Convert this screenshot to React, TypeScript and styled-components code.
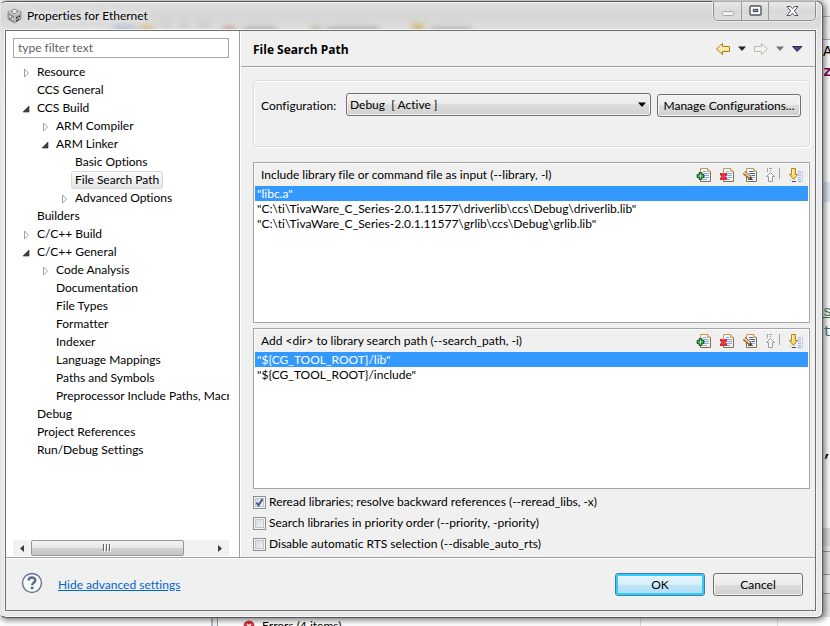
import React from "react";
import styled, { createGlobalStyle, css } from "styled-components";

const GlobalStyle = createGlobalStyle`
  * { box-sizing: border-box; }
  body {
    margin: 0;
    background: #fff;
    color: #000;
    font-family: Lato, "Noto Sans", sans-serif;
    font-size: 12px;
    line-height: 18px;
    font-variant-ligatures: none;
  }
  button, input, select { font: inherit; color: inherit; }
`;

/* ---------- desktop and the editor behind the dialog ---------- */

const Desktop = styled.div`
  position: relative;
  display: flex;
  min-height: 100vh;
  padding: 1px 7px 8px 0;
  overflow: hidden;
`;

const Backdrop = styled.div`
  position: absolute;
  inset: 0;
  background: #fff;
`;

const Band = styled.div<{ $top: number; $height: number; $color: string; $line?: string }>`
  position: absolute;
  right: 0;
  width: 12px;
  top: ${(p) => p.$top}px;
  height: ${(p) => p.$height}px;
  background: ${(p) => p.$color};
  border-bottom: 1px solid ${(p) => p.$line ?? p.$color};
`;

const CodeGlyph = styled.span<{ $top: number; $color: string; $bold?: boolean; $underline?: boolean }>`
  position: absolute;
  right: 0;
  width: 7px;
  overflow: hidden;
  top: ${(p) => p.$top}px;
  color: ${(p) => p.$color};
  font: ${(p) => (p.$bold ? 700 : 400)} 15px/20px "Liberation Mono", monospace;
  text-decoration: ${(p) => (p.$underline ? "underline" : "none")};
`;

const Problems = styled.div`
  position: absolute;
  left: 211px;
  right: 0;
  bottom: -8px;
  height: 16px;
  display: flex;
  align-items: center;
  gap: 7px;
  padding-left: 30px;
  border-left: 2px solid #a9bccb;
  box-shadow: inset 4px 0 0 #f4f4f4, inset 5px 0 0 #9a9a9a;
  white-space: nowrap;
`;

const ProblemsColumn = styled.span<{ $left: number }>`
  position: absolute;
  left: ${(p) => p.$left}px;
  top: 0;
  bottom: 0;
  border-left: 1px solid #dcdcdc;
`;

/* ---------- window frame ---------- */

const Window = styled.section`
  position: relative;
  flex: 1;
  min-width: 0;
  display: flex;
  flex-direction: column;
  padding: 0 6px 6px 4px;
  border: 1px solid #55585a;
  border-left-color: #e4e4e4;
  border-radius: 6px;
  background: linear-gradient(180deg, #dedede 0, #d6d6d6 16px, #e2e2e2 30px, #ebebeb 120px, #e8e8e8 100%);
  box-shadow: inset -1px -1px 0 #f8f8f8, inset 0 1px 0 #f4f4f4, 1px 1px 6px 1px rgba(0, 0, 0, 0.55);
`;

const GlassBlur = styled.svg`
  position: absolute;
  left: 0;
  top: 13px;
`;

const TitleBar = styled.header`
  position: relative;
  display: flex;
  align-items: flex-start;
  gap: 5px;
  height: 28px;
  padding-left: 2px;
  white-space: nowrap;
  svg { flex: none; }
`;

const TitleIcon = styled.span`
  display: flex;
  padding-top: 6px;
`;

const Title = styled.h1`
  flex: 1;
  margin: 0;
  padding-top: 5px;
  font-size: 12px;
  line-height: 18px;
  font-weight: 400;
  text-shadow: 0 0 6px #fff, 0 0 8px #fff;
`;

const Caption = styled.div`
  display: flex;
  height: 19px;
  border: 1px solid #8b8e90;
  border-top: 0;
  border-radius: 0 0 5px 5px;
  overflow: hidden;
  box-shadow: 0 0 0 1px rgba(255, 255, 255, 0.5);
`;

const CaptionButton = styled.button<{ $wide?: boolean }>`
  display: flex;
  align-items: center;
  justify-content: center;
  width: ${(p) => (p.$wide ? 47 : 27)}px;
  padding: 0;
  border: 0;
  background: linear-gradient(180deg, #e9e9e9, #d9d9d9 50%, #dedede);
  & + & { border-left: 1px solid #9a9d9f; }
`;

const Client = styled.div`
  position: relative;
  flex: 1;
  display: flex;
  flex-direction: column;
  border: 1px solid #6d6f71;
  background: #f0f0f0;
  box-shadow: 0 0 0 1px #f4f4f4;
`;

const Body = styled.div`
  flex: 1;
  display: flex;
  min-height: 0;
`;

/* ---------- navigation tree ---------- */

const Sidebar = styled.nav`
  flex: none;
  width: 234px;
  display: flex;
  flex-direction: column;
  padding: 7px 10px 1px 7px;
  background: #fff;
  border-right: 1px solid #a0a0a0;
`;

const Filter = styled.input`
  width: 100%;
  height: 20px;
  padding: 0 4px 2px;
  border: 1px solid #a3a5ab;
  background: #fff;
  outline: none;
  &::placeholder { color: #5f5f5f; opacity: 1; }
`;

const Tree = styled.ul`
  flex: 1;
  margin: 5px 0 0;
  padding: 0;
  list-style: none;
  overflow: hidden;
`;

const TreeRow = styled.li<{ $level: number }>`
  display: flex;
  align-items: center;
  height: 18px;
  padding-left: ${(p) => 8 + p.$level * 19}px;
  white-space: nowrap;
`;

const Twisty = styled.span`
  flex: none;
  display: flex;
  width: 12px;
  padding: 2px 0 0 2px;
`;

const TreeLabel = styled.span<{ $selected?: boolean }>`
  padding: 0 3px;
  line-height: 16px;
  border: 1px solid transparent;
  border-radius: 3px;
  ${(p) =>
    p.$selected &&
    css`
      border-color: #d9d9d9;
      background: linear-gradient(#fafafa, #e6e6e6);
    `}
`;

const ScrollBar = styled.div`
  display: grid;
  grid-template-columns: 18px 153px 1fr 18px;
  align-items: stretch;
  height: 16px;
  background: #f1f1f1;
`;

const ScrollButton = styled.button`
  display: flex;
  align-items: center;
  justify-content: center;
  padding: 0;
  border: 0;
  background: none;
`;

const ScrollThumb = styled.div`
  display: flex;
  align-items: center;
  justify-content: center;
  border: 1px solid #979797;
  border-radius: 2px;
  background: linear-gradient(#f3f3f3, #e6e6e7 50%, #d1d2d4 50%, #c3c4c6);
`;

/* ---------- settings page ---------- */

const Page = styled.main`
  flex: 1;
  min-width: 0;
  display: flex;
  flex-direction: column;
  border-left: 1px solid #fff;
`;

const PageHeader = styled.div`
  display: flex;
  align-items: center;
  justify-content: space-between;
  height: 36px;
  padding: 0 12px;
  border-bottom: 1px solid #a0a0a0;
  box-shadow: 0 1px 0 #fff;
`;

const PageTitle = styled.h2`
  margin: 0;
  padding-top: 3px;
  font-family: "Open Sans", "Noto Sans", sans-serif;
  font-size: 12px;
  font-weight: 700;
`;

const History = styled.div`
  display: flex;
  align-items: center;
  gap: 7px;
`;

const IconButton = styled.button`
  display: flex;
  padding: 0;
  border: 0;
  background: none;
`;

const Content = styled.div`
  flex: 1;
  display: flex;
  flex-direction: column;
  padding: 13px 5px 4px 12px;
`;

const ConfigGroup = styled.div`
  display: flex;
  align-items: flex-start;
  gap: 6px;
  height: 67px;
  margin-bottom: 15px;
  padding: 12px 8px 0 7px;
  border: 1px solid #d5dfe5;
  border-radius: 4px;
  box-shadow: inset 1px 1px 0 #fff, 1px 1px 0 #fff;
`;

const ConfigLabel = styled.label`
  width: 79px;
  padding-top: 4px;
  white-space: nowrap;
`;

const SelectBox = styled.div`
  flex: 1;
  min-width: 0;
  display: grid;
  align-items: center;
  & > * { grid-area: 1 / 1; }
  svg { justify-self: end; margin-right: 5px; pointer-events: none; }
`;

const face = css`
  border: 1px solid #707070;
  border-radius: 3px;
  background: linear-gradient(#f2f2f2, #ebebeb 50%, #dddddd 50%, #cfcfcf);
  box-shadow: inset 0 0 0 1px #f7f7f7;
`;

const Select = styled.select`
  appearance: none;
  width: 100%;
  height: 23px;
  padding: 0 3px;
  ${face}
`;

const PushButton = styled.button<{ $width: number; $primary?: boolean }>`
  width: ${(p) => p.$width}px;
  height: 23px;
  padding: 0;
  white-space: nowrap;
  ${face}
  ${(p) =>
    p.$primary &&
    css`
      border-color: #3c7fb1;
      background: linear-gradient(#e6f5fc, #d9f0fb 50%, #bee6fa 50%, #b0dcf3);
      box-shadow: inset 0 0 0 2px #35cdf6;
    `}
`;

const ManageSlot = styled.div`
  padding-top: 1px;
`;

const ListPanel = styled.section`
  flex: 1;
  min-height: 100px;
  padding: 1px;
  border: 1px solid #a3a5ab;
  background: #fff;
  & + & { margin-top: 5px; }
`;

const ListHeader = styled.div`
  display: flex;
  align-items: center;
  justify-content: space-between;
  height: 22px;
  padding: 0 4px 0 6px;
  background: #f0f0f0;
`;

const ListTitle = styled.h3`
  margin: 0;
  font-size: 12px;
  font-weight: 400;
`;

const ListTools = styled.div`
  display: flex;
  gap: 7px;
`;

const List = styled.ul`
  margin: 0;
  padding: 0;
  list-style: none;
`;

const ListItem = styled.li<{ $selected?: boolean }>`
  height: 15px;
  padding-left: 2px;
  line-height: 15px;
  white-space: nowrap;
  background: ${(p) => (p.$selected ? "#3399ff" : "transparent")};
  color: ${(p) => (p.$selected ? "#fff" : "#000")};
`;

const Options = styled.div`
  display: flex;
  flex-direction: column;
  gap: 3px;
  padding-top: 4px;
`;

const Option = styled.label`
  display: flex;
  align-items: center;
  gap: 3px;
  height: 18px;
`;

const Check = styled.input`
  appearance: none;
  width: 13px;
  height: 13px;
  margin: 0;
  border: 1px solid #8e8f8f;
  background: linear-gradient(135deg, #cfd3da, #f6f6f6);
  box-shadow: inset 0 0 0 1px #f4f4f4, inset 0 0 0 2px #c2c6cc;
`;

const CheckBox = styled.span`
  display: grid;
  & > * { grid-area: 1 / 1; }
  svg { pointer-events: none; }
`;

/* ---------- footer ---------- */

const Footer = styled.footer`
  display: flex;
  align-items: center;
  gap: 8px;
  height: 53px;
  padding: 1px 12px 0 15px;
  border-top: 1px solid #a0a0a0;
  box-shadow: inset 0 1px 0 #fff;
`;

const HelpButton = styled(IconButton)`
  padding-bottom: 3px;
`;

const AdvancedLink = styled.a`
  flex: 1;
  padding-left: 7px;
  color: #0066cc;
  text-decoration: underline;
`;

/* ---------- icons ---------- */

const CubeIcon = () => (
  <svg width="15" height="16" viewBox="0 0 15 16">
    <path d="M7.5 1 14 4v7l-6.500 4L1 11V4z" fill="#b9b9b9" stroke="#8a8a8a" />
    <path d="M7.500 1.500 13 4 7.500 7 2 4z" fill="#e6e6e6" />
    <path d="M1.500 5 7 8v6.500L1.500 11z" fill="#8f8f8f" />
    <path d="M4 3.500h2v1H4zM9 3.500h2v1H9zM6.500 5h2v1h-2z" fill="#555" />
    <path d="M2.500 7l1.500 1v2l-1.500-1zM5 9.500l1.500 1v2L5 11.500z" fill="#f4f4f4" />
    <path d="M9 9l1.500-1v2L9 11zM11.500 8l1.500-1v2l-1.500 1zM9 12.500l3-2v1.200l-3 2z" fill="#2e2e2e" />
  </svg>
);

const TriangleDown = ({ color, size = 8 }: { color: string; size?: number }) => (
  <svg width={size} height="6" viewBox={`0 0 ${size} 6`}>
    <path d={`M0 0.500H${size}L${size / 2} 5z`} fill={color} />
  </svg>
);

const MenuTriangle = () => (
  <svg width="12" height="6" viewBox="0 0 12 6">
    <path d="M1.500 .5H11L6.200 5.500z" fill="#4b4690" stroke="#16122e" strokeWidth=".8" />
  </svg>
);

const BackArrow = () => (
  <svg width="16" height="14" viewBox="0 0 16 14">
    <defs>
      <linearGradient id="gold" x1="0" y1="0" x2="0" y2="1">
        <stop offset="0" stopColor="#fffbe6" />
        <stop offset="1" stopColor="#fbd873" />
      </linearGradient>
    </defs>
    <path d="M1.500 7 7.500 1.500V4.500h7v5h-7v3z" fill="url(#gold)" stroke="#b07a10" strokeLinejoin="round" />
  </svg>
);

const ForwardArrow = () => (
  <svg width="16" height="14" viewBox="0 0 16 14">
    <path d="M14.500 7 8.500 1.500V4.500h-7v5h7v3z" fill="#f3f3f1" stroke="#b9b9b3" strokeLinejoin="round" />
  </svg>
);

const Sheet = ({ x }: { x: number }) => (
  <g transform={`translate(${x} 0)`}>
    <path d="M.5 1.500H8L10.500 4.500V14.500H.5z" fill="#f1f5fc" />
    <path d="M.5 9V1.500H8" fill="none" stroke="#c29a4c" />
    <path d="M10.500 4.500H7.500V1.500z" fill="#e2b75a" stroke="#c29a4c" strokeWidth=".6" />
    <path d="M.5 9V14.500H10.500V4.500" fill="none" stroke="#85713f" />
    <path d="M3 4.500H6M3 6.500H9M3 8.500H9M3 10.500H9M3 12.500H7" stroke="#8fa6d4" />
  </g>
);

const AddIcon = () => (
  <svg width="16" height="16" viewBox="0 0 16 16">
    <Sheet x={4} />
    <path d="M3 5.500H6V7.500H8V10.500H6V12.500H3V10.500H1V7.500H3z" fill="#1f7a35" stroke="#0f5a26" strokeWidth=".8" />
    <path d="M4.500 6.500V11.500M2 9H7" stroke="#a6e08a" />
  </svg>
);

const DeleteIcon = () => (
  <svg width="16" height="16" viewBox="0 0 16 16">
    <Sheet x={4} />
    <path d="M1 6H3.500L4.500 7.500 5.500 6H8V8L6.500 9.500 8 11V13H5.500L4.500 11.500 3.500 13H1V11L2.500 9.500 1 8z" fill="#dd2234" />
    <path d="M3 8l3 3M6 8l-3 3" stroke="#f0606c" strokeWidth=".8" />
  </svg>
);

const EditIcon = () => (
  <svg width="16" height="16" viewBox="0 0 16 16">
    <Sheet x={4} />
    <path d="M7 4.500H11M8 6.500H13M10 8.500H13M6 12.500H11" stroke="#4d628f" />
    <path d="M2 5.500 8 10.500" stroke="#80592a" strokeWidth="3.600" />
    <path d="M2 5.200 7.800 10" stroke="#f3cb8b" strokeWidth="2" />
    <path d="M7 12 9.800 12.500 9.200 9.500z" fill="#222" />
  </svg>
);

const UpIcon = () => (
  <svg width="16" height="16" viewBox="0 0 16 16">
    <path d="M5.500 5.500 9.500 9.500H7.500V14.500H3.500V9.500H1.500z" fill="#f6f6f6" stroke="#9c9c9c" />
    <path d="M2.500 1V5M4 1.500H7M5 3.500H6M14.500 1V12" stroke="#a2a2a2" />
  </svg>
);

const DownIcon = () => (
  <svg width="16" height="16" viewBox="0 0 16 16">
    <path d="M9 4H15V15H9z" fill="#e6edf7" />
    <path d="M10 4.500H13M10 6.500H13M10 8.500H13M10 10.500H13M10 12.500H13" stroke="#a9bddf" />
    <path d="M14.500 4V15M2.500 12V15" stroke="#c8cfdb" />
    <path d="M4 14.500H8" stroke="#27508c" />
    <path d="M10 14.500H13" stroke="#8ca9d2" />
    <path d="M3.500 1.500H7.500V7.500H9.500L5.500 12.500 1.500 7.500H3.500z" fill="#fbd96d" stroke="#b8831a" />
    <path d="M4.500 2.500V8" stroke="#fff5c8" />
  </svg>
);

const CollapsedIcon = () => (
  <svg width="8" height="10" viewBox="0 0 8 10">
    <path d="M1.500 1 5.500 5 1.500 9z" fill="#fff" stroke="#a0a0a0" />
  </svg>
);

const ExpandedIcon = () => (
  <svg width="8" height="10" viewBox="0 0 8 10">
    <path d="M6 2V8H0z" fill="#404040" stroke="#262626" strokeWidth=".6" />
  </svg>
);

const HelpIcon = () => (
  <svg width="22" height="22" viewBox="0 0 22 22">
    <circle cx="11" cy="11" r="9.500" fill="#f8f9fb" stroke="#66748c" strokeWidth="1.400" />
    <path d="M7.600 8.600C7.600 4.500 14.300 4.600 14.300 8.300 14.300 10.600 11.200 10.800 11.200 13.200" fill="none" stroke="#5d6c88" strokeWidth="2.500" />
    <rect x="9.800" y="14.700" width="2.700" height="2.500" fill="#5d6c88" />
  </svg>
);

/* ---------- data ---------- */

type Node = { label: string; level: number; open?: boolean; selected?: boolean };

const nodes: Node[] = [
  { label: "Resource", level: 0, open: false },
  { label: "CCS General", level: 0 },
  { label: "CCS Build", level: 0, open: true },
  { label: "ARM Compiler", level: 1, open: false },
  { label: "ARM Linker", level: 1, open: true },
  { label: "Basic Options", level: 2 },
  { label: "File Search Path", level: 2, selected: true },
  { label: "Advanced Options", level: 2, open: false },
  { label: "Builders", level: 0 },
  { label: "C/C++ Build", level: 0, open: false },
  { label: "C/C++ General", level: 0, open: true },
  { label: "Code Analysis", level: 1, open: false },
  { label: "Documentation", level: 1 },
  { label: "File Types", level: 1 },
  { label: "Formatter", level: 1 },
  { label: "Indexer", level: 1 },
  { label: "Language Mappings", level: 1 },
  { label: "Paths and Symbols", level: 1 },
  { label: "Preprocessor Include Paths, Macros etc.", level: 1 },
  { label: "Debug", level: 0 },
  { label: "Project References", level: 0 },
  { label: "Run/Debug Settings", level: 0 },
];

const lists = [
  {
    title: "Include library file or command file as input (--library, -l)",
    items: [
      '"libc.a"',
      '"C:\\ti\\TivaWare_C_Series-2.0.1.11577\\driverlib\\ccs\\Debug\\driverlib.lib"',
      '"C:\\ti\\TivaWare_C_Series-2.0.1.11577\\grlib\\ccs\\Debug\\grlib.lib"',
    ],
  },
  {
    title: "Add <dir> to library search path (--search_path, -i)",
    items: ['"${CG_TOOL_ROOT}/lib"', '"${CG_TOOL_ROOT}/include"'],
  },
];

const tools = [
  { name: "Add", Icon: AddIcon },
  { name: "Delete", Icon: DeleteIcon },
  { name: "Edit", Icon: EditIcon },
  { name: "Move up", Icon: UpIcon },
  { name: "Move down", Icon: DownIcon },
];

const options = [
  { label: "Reread libraries; resolve backward references (--reread_libs, -x)", on: true },
  { label: "Search libraries in priority order (--priority, -priority)", on: false },
  { label: "Disable automatic RTS selection (--disable_auto_rts)", on: false },
];

const CheckOption = ({ label, on }: { label: string; on: boolean }) => {
  const [checked, setChecked] = React.useState(on);
  return (
    <Option>
      <CheckBox>
        <Check type="checkbox" checked={checked} onChange={(e) => setChecked(e.target.checked)} />
        {checked && (
          <svg width="13" height="13" viewBox="0 0 13 13">
            <path d="M3.500 6.500 5.500 9.500 9.500 3" fill="none" stroke="#3f5896" strokeWidth="2" />
          </svg>
        )}
      </CheckBox>
      {label}
    </Option>
  );
};

export default function App() {
  return (
    <Desktop>
      <GlobalStyle />
      <Backdrop aria-hidden="true">
        <Band $top={0} $height={17} $color="#f4f4f4" $line="#b5b5b5" />
        <Band $top={17} $height={23} $color="#f4f4f4" $line="#a9a9a9" />
        <Band $top={182} $height={20} $color="#dfeaf7" />
        <Band $top={528} $height={18} $color="#dedede" />
        <Band $top={546} $height={6} $color="#f0f0f0" $line="#9a9a9a" />
        <Band $top={552} $height={23} $color="#e8e8e8" $line="#9a9a9a" />
        <Band $top={575} $height={19} $color="#f4f4f4" $line="#9a9a9a" />
        <Band $top={594} $height={23} $color="#e6e6e6" />
        <CodeGlyph $top={43} $color="#000">A</CodeGlyph>
        <CodeGlyph $top={63} $color="#7f0055" $bold>z</CodeGlyph>
        <CodeGlyph $top={303} $color="#3f7f5f" $underline>s</CodeGlyph>
        <CodeGlyph $top={323} $color="#3f7f7f">t</CodeGlyph>
        <CodeGlyph $top={443} $color="#000" $bold>,</CodeGlyph>
        <Problems>
          <svg width="12" height="12" viewBox="0 0 12 12">
            <circle cx="6" cy="6" r="5.500" fill="#d2333c" />
            <path d="M4 4l4 4M8 4l-4 4" stroke="#fff" strokeWidth="1.500" />
          </svg>
          Errors (4 items)
          <ProblemsColumn $left={427} />
          <ProblemsColumn $left={564} />
        </Problems>
      </Backdrop>

      <Window>
        <GlassBlur width="520" height="16" aria-hidden="true">
          <defs>
            <filter id="glass" x="-5%" y="-100%" width="110%" height="300%">
              <feGaussianBlur stdDeviation="3" />
            </filter>
          </defs>
          <g filter="url(#glass)" opacity=".8">
            <rect x="112" y="11" width="22" height="7" fill="#9fb8d4" />
            <rect x="138" y="11" width="14" height="7" fill="#d9b25c" />
            <rect x="160" y="8" width="10" height="4" fill="#bcbcbc" />
            <rect x="178" y="8" width="10" height="4" fill="#bcbcbc" />
            <rect x="196" y="8" width="14" height="4" fill="#bcbcbc" />
            <rect x="222" y="12" width="12" height="6" fill="#c8777a" />
            <rect x="242" y="13" width="34" height="5" fill="#8c8c8c" />
            <rect x="310" y="11" width="10" height="7" fill="#b3ab8c" />
            <rect x="326" y="13" width="52" height="5" fill="#8c8c8c" />
            <rect x="411" y="9" width="12" height="8" fill="#c9ab4e" />
            <rect x="430" y="13" width="40" height="5" fill="#949494" />
          </g>
        </GlassBlur>
        <TitleBar>
          <TitleIcon><CubeIcon /></TitleIcon>
          <Title>Properties for Ethernet</Title>
          <Caption>
            <CaptionButton aria-label="Minimize" disabled>
              <svg width="14" height="18" viewBox="0 0 14 18">
                <rect x="1.500" y="9.500" width="11" height="4" rx="1" fill="#f2f2f2" stroke="#a9a9a9" />
              </svg>
            </CaptionButton>
            <CaptionButton aria-label="Maximize">
              <svg width="13" height="12" viewBox="0 0 13 12">
                <rect x="1" y="1" width="11" height="9" rx="1" fill="#fff" stroke="#4e5563" strokeWidth="1.400" />
                <rect x="4.500" y="4.500" width="4" height="2" fill="#e2e2e2" stroke="#4e5563" strokeWidth="1.400" />
              </svg>
            </CaptionButton>
            <CaptionButton aria-label="Close" $wide>
              <svg width="13" height="12" viewBox="0 0 13 12">
                <path d="M1 1.500H4.500L6.500 3.800 8.500 1.500H12L8.400 6 12 10.500H8.500L6.500 8.200 4.500 10.500H1L4.600 6z" fill="#fff" stroke="#4e5563" />
              </svg>
            </CaptionButton>
          </Caption>
        </TitleBar>

        <Client>
          <Body>
            <Sidebar aria-label="Property pages">
              <Filter type="text" placeholder="type filter text" aria-label="Filter" />
              <Tree>
                {nodes.map((n) => (
                  <TreeRow key={n.label} $level={n.level}>
                    <Twisty>
                      {n.open === true && <ExpandedIcon />}
                      {n.open === false && <CollapsedIcon />}
                    </Twisty>
                    <TreeLabel $selected={n.selected}>{n.label}</TreeLabel>
                  </TreeRow>
                ))}
              </Tree>
              <ScrollBar>
                <ScrollButton aria-label="Scroll left">
                  <svg width="4" height="7" viewBox="0 0 4 7"><path d="M4 0V7L0 3.500z" fill="#3c3c3c" /></svg>
                </ScrollButton>
                <ScrollThumb>
                  <svg width="9" height="8" viewBox="0 0 9 8">
                    <path d="M.5 0V7M3.500 0V7M6.500 0V7" stroke="#5f6266" />
                    <path d="M1.500 1V8M4.500 1V8M7.500 1V8" stroke="#fff" />
                  </svg>
                </ScrollThumb>
                <span />
                <ScrollButton aria-label="Scroll right">
                  <svg width="4" height="7" viewBox="0 0 4 7"><path d="M0 0V7L4 3.500z" fill="#3c3c3c" /></svg>
                </ScrollButton>
              </ScrollBar>
            </Sidebar>

            <Page>
              <PageHeader>
                <PageTitle>File Search Path</PageTitle>
                <History>
                  <IconButton aria-label="Back"><BackArrow /></IconButton>
                  <IconButton aria-label="Back history"><TriangleDown color="#222" /></IconButton>
                  <IconButton aria-label="Forward" disabled><ForwardArrow /></IconButton>
                  <IconButton aria-label="Forward history"><TriangleDown color="#777" /></IconButton>
                  <IconButton aria-label="Menu"><MenuTriangle /></IconButton>
                </History>
              </PageHeader>

              <Content>
                <ConfigGroup>
                  <ConfigLabel htmlFor="configuration">Configuration:</ConfigLabel>
                  <SelectBox>
                    <Select id="configuration">
                      <option>{"Debug\u00a0 [ Active ]"}</option>
                    </Select>
                    <TriangleDown color="#000" />
                  </SelectBox>
                  <ManageSlot>
                    <PushButton $width={144}>Manage Configurations...</PushButton>
                  </ManageSlot>
                </ConfigGroup>

                {lists.map((list) => (
                  <ListPanel key={list.title}>
                    <ListHeader>
                      <ListTitle>{list.title}</ListTitle>
                      <ListTools>
                        {tools.map(({ name, Icon }) => (
                          <IconButton key={name} aria-label={name}><Icon /></IconButton>
                        ))}
                      </ListTools>
                    </ListHeader>
                    <List>
                      {list.items.map((item, i) => (
                        <ListItem key={item} $selected={i === 0}>{item}</ListItem>
                      ))}
                    </List>
                  </ListPanel>
                ))}

                <Options>
                  {options.map((o) => (
                    <CheckOption key={o.label} label={o.label} on={o.on} />
                  ))}
                </Options>
              </Content>
            </Page>
          </Body>

          <Footer>
            <HelpButton aria-label="Help"><HelpIcon /></HelpButton>
            <AdvancedLink href="#advanced">Hide advanced settings</AdvancedLink>
            <PushButton $width={90} $primary>OK</PushButton>
            <PushButton $width={90}>Cancel</PushButton>
          </Footer>
        </Client>
      </Window>
    </Desktop>
  );
}
